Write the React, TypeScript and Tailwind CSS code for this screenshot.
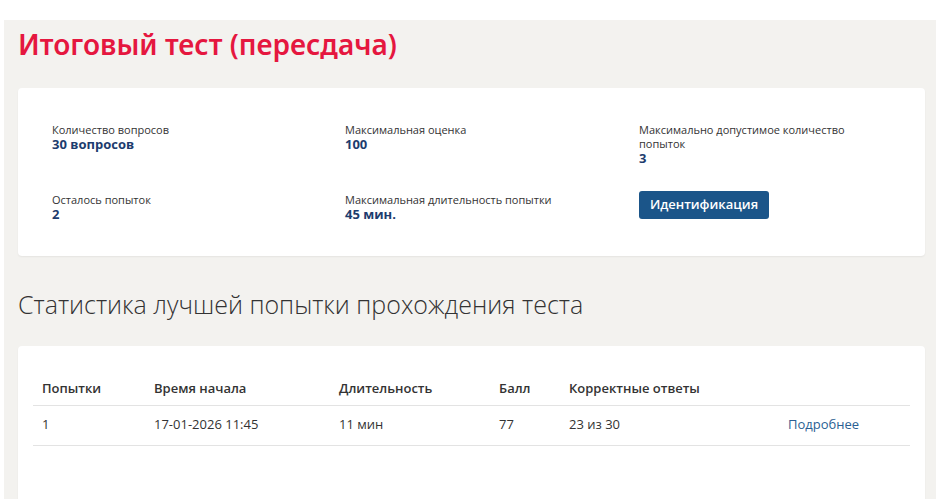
export default function App() {
  const stats = [
    { label: "Количество вопросов", value: "30 вопросов" },
    { label: "Максимальная оценка", value: "100" },
    { label: "Максимально допустимое количество попытки", value: "3" },
    { label: "Осталось попыток", value: "2" },
    { label: "Максимальная длительность попытки", value: "45 мин." },
  ];

  return (
    <div className="w-[936px] h-[499px] overflow-hidden bg-white pt-[20px] pl-[4px] font-['Open_Sans',sans-serif]">
      <div className="h-full bg-[#f3f2ef] pl-[14px] pr-[11px]">
        <h1 className="pt-[6px] text-[28px] leading-[36px] font-semibold text-[#e5173f] font-['Noto_Sans',sans-serif]">
          Итоговый тест (пересдача)
        </h1>

        <div className="mt-[26px] h-[168px] rounded bg-white shadow-[0_1px_2px_rgba(0,0,0,0.06)] px-[34px] pt-[35px]">
          <div className="grid grid-cols-[293px_294px_250px] gap-y-[25px] text-[#333]">
            {stats.slice(0, 3).map((s) => (
              <div key={s.label}>
                <div className="text-[11px] leading-[14px] w-[220px]">
                  {s.label === "Максимально допустимое количество попытки" ? (
                    <>
                      Максимально допустимое количество
                      <br />
                      попыток
                    </>
                  ) : (
                    s.label
                  )}
                </div>
                <div className="text-[13px] leading-[14px] font-bold text-[#1d3c6e]">{s.value}</div>
              </div>
            ))}
            {stats.slice(3).map((s) => (
              <div key={s.label} className="pt-[3px]">
                <div className="text-[11px] leading-[14px]">{s.label}</div>
                <div className="text-[13px] leading-[14px] font-bold text-[#1d3c6e]">{s.value}</div>
              </div>
            ))}
            <div className="pt-[1px]">
              <button className="h-[28px] w-[130px] rounded-[3px] bg-[#1b5589] text-white text-[13px] font-semibold">
                Идентификация
              </button>
            </div>
          </div>
        </div>

        <h2 className="mt-[33px] text-[25px] leading-[30px] font-light text-[#333]">
          Статистика лучшей попытки прохождения теста
        </h2>

        <div className="mt-[27px] h-[200px] rounded bg-white shadow-[0_1px_2px_rgba(0,0,0,0.06)] px-[15px] pt-[27px]">
          <table className="w-full text-[13px] text-[#333] border-collapse">
            <thead>
              <tr className="border-b border-[#e3e3e3]">
                <th className="w-[121px] h-[32px] pl-[9px] text-left font-semibold">Попытки</th>
                <th className="w-[185px] text-left font-semibold">Время начала</th>
                <th className="w-[160px] text-left font-semibold">Длительность</th>
                <th className="w-[70px] text-left font-semibold">Балл</th>
                <th className="w-[219px] text-left font-semibold">Корректные ответы</th>
                <th></th>
              </tr>
            </thead>
            <tbody>
              <tr className="border-b border-[#e3e3e3]">
                <td className="h-[40px] pl-[9px]">1</td>
                <td>17-01-2026 11:45</td>
                <td>11 мин</td>
                <td>77</td>
                <td>23 из 30</td>
                <td>
                  <a className="text-[#2b5f93]" href="#">Подробнее</a>
                </td>
              </tr>
            </tbody>
          </table>
        </div>
      </div>
    </div>
  );
}
